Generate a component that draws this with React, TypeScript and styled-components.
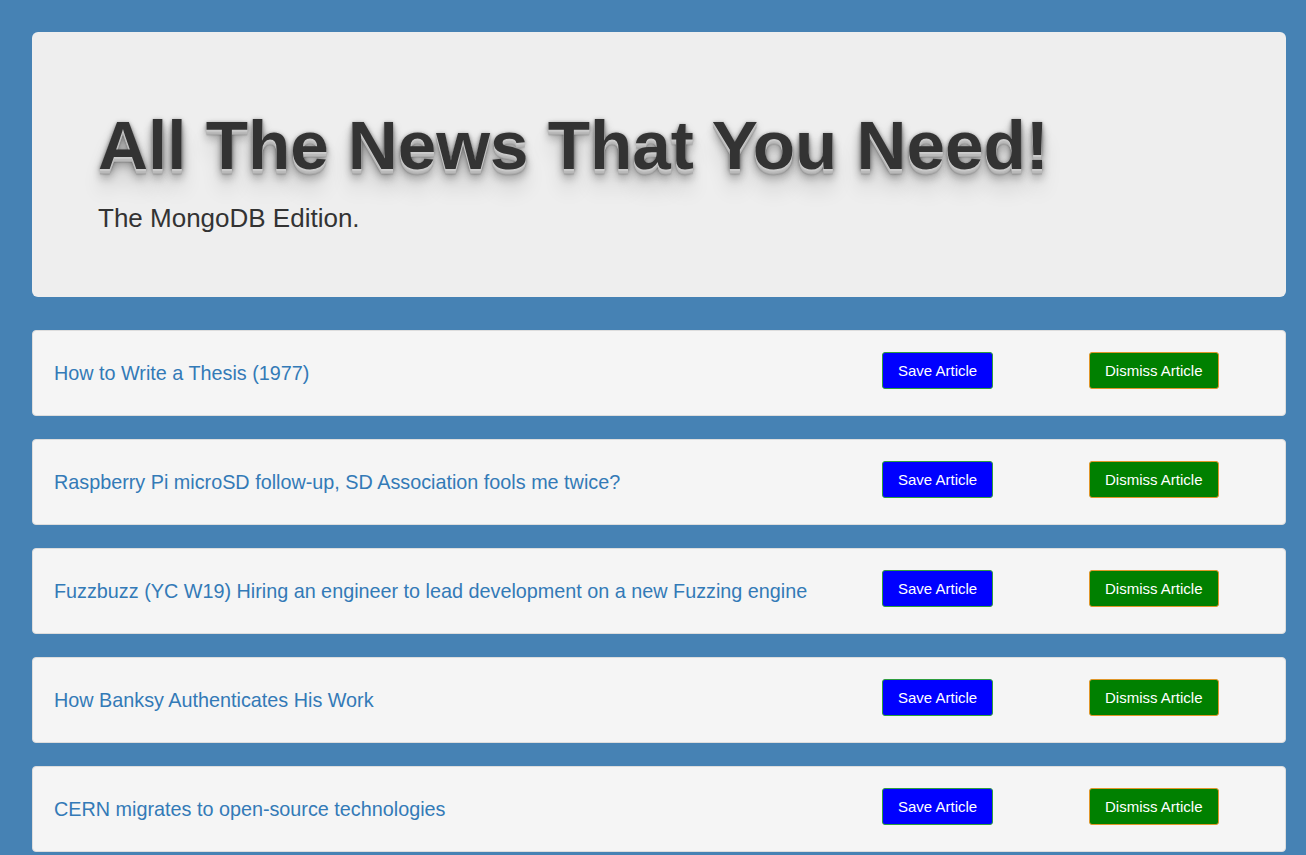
import React from "react";
import styled, { createGlobalStyle } from "styled-components";

const GlobalStyle = createGlobalStyle`
  html, body {
    margin: 0;
    padding: 0;
    background: #4682b4;
  }
  body {
    font-family: "Liberation Sans", Arial, Helvetica, sans-serif;
    color: #333;
  }
  * { box-sizing: border-box; }
`;

const Page = styled.div`
  padding: 32px 20px 0 32px;
  display: flex;
  flex-direction: column;
  min-height: 855px;
`;

const Jumbotron = styled.header`
  background: #eee;
  border-radius: 6px;
  height: 265px;
  padding: 75px 60px 0 66px;
  margin-bottom: 33px;
`;

const Title = styled.h1`
  margin: 0;
  font-family: "Liberation Sans", Arial, sans-serif;
  font-weight: 700;
  font-size: 69.2px;
  line-height: 1.1;
  color: #333;
  text-shadow: 0 1px 0 #ccc, 0 2px 0 #c9c9c9, 0 3px 0 #bbb, 0 4px 0 #b9b9b9,
    0 5px 0 #aaa, 0 6px 1px rgba(0, 0, 0, 0.1), 0 0 5px rgba(0, 0, 0, 0.1),
    0 1px 3px rgba(0, 0, 0, 0.3), 0 3px 5px rgba(0, 0, 0, 0.2),
    0 5px 10px rgba(0, 0, 0, 0.25), 0 10px 10px rgba(0, 0, 0, 0.2),
    0 20px 20px rgba(0, 0, 0, 0.15);
`;

const Subtitle = styled.p`
  margin: 20px 0 0;
  font-size: 26px;
  line-height: 1.2;
  color: #333;
`;

const List = styled.div`
  display: flex;
  flex-direction: column;
  gap: 23px;
`;

const Card = styled.article`
  height: 86px;
  background: #f5f5f5;
  border: 1px solid #ddd;
  border-radius: 4px;
  display: grid;
  grid-template-columns: 1fr 207px 196px;
  align-items: center;
  padding-left: 21px;
`;

const Headline = styled.a`
  margin-top: 2px;
  font-size: 19.8px;
  line-height: 1.1;
  color: #337ab7;
  text-decoration: none;
`;

const ActionButton = styled.button<{ $bg: string; $border: string }>`
  justify-self: start;
  margin-bottom: 5px;
  height: 37px;
  padding: 0 15px;
  background: ${(p) => p.$bg};
  border: 1px solid ${(p) => p.$border};
  border-radius: 3px;
  color: #fff;
  font-family: "Liberation Sans", Arial, sans-serif;
  font-size: 15px;
  cursor: pointer;
`;

const articles = [
  "How to Write a Thesis (1977)",
  "Raspberry Pi microSD follow-up, SD Association fools me twice?",
  "Fuzzbuzz (YC W19) Hiring an engineer to lead development on a new Fuzzing engine",
  "How Banksy Authenticates His Work",
  "CERN migrates to open-source technologies",
];

export default function App() {
  return (
    <>
      <GlobalStyle />
      <Page>
        <Jumbotron>
          <Title>All The News That You Need!</Title>
          <Subtitle>The MongoDB Edition.</Subtitle>
        </Jumbotron>
        <List>
          {articles.map((t) => (
            <Card key={t}>
              <Headline href="#">{t}</Headline>
              <ActionButton $bg="#0000ff" $border="#2e9e3e">
                Save Article
              </ActionButton>
              <ActionButton $bg="#008000" $border="#e0962a">
                Dismiss Article
              </ActionButton>
            </Card>
          ))}
        </List>
      </Page>
    </>
  );
}
